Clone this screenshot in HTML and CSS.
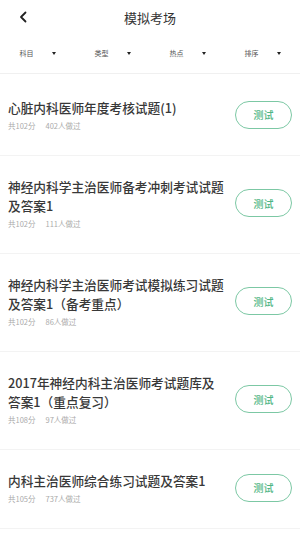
FILE: index.html
```html
<!DOCTYPE html>
<html lang="zh">
<head>
<meta charset="utf-8">
<link rel="stylesheet" href="styles.css">
</head>
<body>
<div class="page">
  <header class="topbar">
    <span class="back">
      <svg width="10" height="12" viewBox="0 0 10 12"><path d="M7.5 1.5 L3 6 L7.5 10.5" fill="none" stroke="#222" stroke-width="1.8" stroke-linecap="round" stroke-linejoin="round"/></svg>
    </span>
    <h1 class="title">模拟考场</h1>
  </header>
  <nav class="filters">
    <div class="filter"><span>科目</span><i class="caret"></i></div>
    <div class="filter"><span>类型</span><i class="caret"></i></div>
    <div class="filter"><span>热点</span><i class="caret"></i></div>
    <div class="filter"><span>排序</span><i class="caret"></i></div>
  </nav>
  <ul class="list">
    <li class="item">
      <div class="info">
        <div class="name">心脏内科医师年度考核试题(1)</div>
        <div class="meta"><span>共102分</span><span>402人做过</span></div>
      </div>
      <button class="btn">测试</button>
    </li>
    <li class="item">
      <div class="info">
        <div class="name">神经内科学主治医师备考冲刺考试试题及答案1</div>
        <div class="meta"><span>共102分</span><span>111人做过</span></div>
      </div>
      <button class="btn">测试</button>
    </li>
    <li class="item">
      <div class="info">
        <div class="name">神经内科学主治医师考试模拟练习试题及答案1（备考重点）</div>
        <div class="meta"><span>共102分</span><span>86人做过</span></div>
      </div>
      <button class="btn">测试</button>
    </li>
    <li class="item">
      <div class="info">
        <div class="name">2017年神经内科主治医师考试题库及<br>答案1（重点复习）</div>
        <div class="meta"><span>共108分</span><span>97人做过</span></div>
      </div>
      <button class="btn">测试</button>
    </li>
    <li class="item">
      <div class="info">
        <div class="name">内科主治医师综合练习试题及答案1</div>
        <div class="meta"><span>共105分</span><span>737人做过</span></div>
      </div>
      <button class="btn">测试</button>
    </li>
  </ul>
</div>
</body>
</html>
```
FILE: styles.css
```css
* { box-sizing: border-box; }
html, body { margin: 0; padding: 0; background: #fff; }
body {
  font-family: "Noto Sans CJK SC", "Noto Sans", sans-serif;
  color: #333;
  width: 300px;
  height: 533px;
  overflow: hidden;
}
.page { width: 300px; }
.topbar {
  position: relative;
  height: 35px;
  display: flex;
  align-items: center;
  justify-content: center;
}
.back {
  position: absolute;
  left: 18px;
  top: 11px;
  display: flex;
}
.title {
  margin: 0;
  font-size: 13px;
  font-weight: 400;
  color: #333;
  line-height: 35px;
}
.filters {
  display: grid;
  grid-template-columns: repeat(4, 1fr);
  height: 39px;
  border-bottom: 1px solid #f0f0f0;
  padding-bottom: 2px;
}
.filter {
  display: flex;
  align-items: center;
  justify-content: center;
  gap: 18px;
  font-size: 7px;
  color: #555;
}
.caret {
  width: 0;
  height: 0;
  border-left: 2.5px solid transparent;
  border-right: 2.5px solid transparent;
  border-top: 3px solid #222;
}
.list {
  list-style: none;
  margin: 0;
  padding: 3px 0 0 0;
}
.item {
  display: flex;
  align-items: center;
  padding: 21px 8px 24px 8px;
  border-bottom: 1px solid #f3f3f3;
}
.info { flex: 1; min-width: 0; padding-right: 2px; }
.name {
  font-size: 12.7px;
  line-height: 19px;
  font-weight: 500;
  color: #383838;
}
.meta {
  margin-top: 4px;
  line-height: 10px;
  font-size: 7.5px;
  color: #aaa;
  display: flex;
  gap: 10px;
}
.btn {
  flex: none;
  width: 57px;
  height: 28px;
  border: 1px solid #7cc8a4;
  border-radius: 14px;
  background: #fff;
  color: #4fb584;
  font-family: inherit;
  font-size: 10px;
  font-weight: 500;
  padding: 0;
}
```
